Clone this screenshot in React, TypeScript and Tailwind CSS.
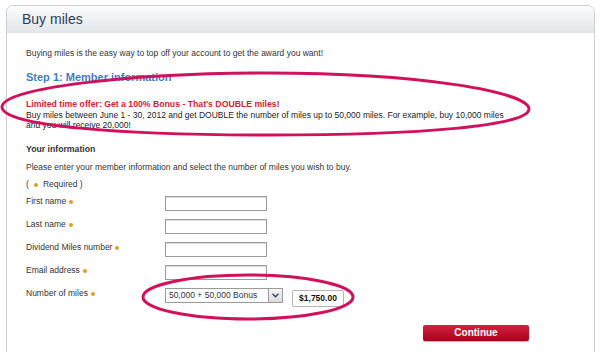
import React from 'react'

const font = { fontFamily: '"Liberation Sans", Arial, sans-serif' }

function Dot() {
  return <span className="ml-[3px] inline-block h-[4px] w-[4px] rounded-full bg-[#d9a12a] align-middle" />
}

function Field({ label }: { label: string }) {
  return (
    <div className="flex h-[23px] items-start">
      <div className="w-[139px] text-[8.5px] leading-[11px] text-[#333]">
        {label}
        <Dot />
      </div>
      <div className="h-[15px] w-[102px] border border-[#9a9a9a] bg-white shadow-[inset_0_1px_1px_rgba(0,0,0,0.15)]" />
    </div>
  )
}

export default function App() {
  return (
    <div className="relative h-[352px] w-[600px] overflow-hidden bg-white" style={font}>
      <div className="ml-[6px] mt-[5px] h-[360px] w-[589px] rounded-t-[7px] border border-[#cfcfcf] bg-white">
        <div className="flex h-[27px] items-center rounded-t-[7px] border-b border-[#e3e3e3] bg-gradient-to-b from-[#fbfbfc] to-[#e3e7ea] pl-[15px]">
          <span className="text-[14px] leading-none text-[#2c3d5b]">Buy miles</span>
        </div>
        <div className="pl-[19px] pr-[20px] pt-[15px]">
          <p className="text-[8.5px] leading-[11px] text-[#333]">
            Buying miles is the easy way to top off your account to get the award you want!
          </p>
          <h2 className="mt-[11px] text-[11px] font-bold leading-[14px] text-[#3a7fc2]">Step 1: Member information</h2>
          <p className="mt-[15px] text-[8.7px] font-bold leading-[11px] text-[#c9262c]">
            Limited time offer: Get a 100% Bonus - That's DOUBLE miles!
          </p>
          <p className="w-[482px] text-[8.5px] leading-[10px] text-[#222]">
            Buy miles between June 1 - 30, 2012 and get DOUBLE the number of miles up to 50,000 miles. For example, buy 10,000 miles and you will receive 20,000!
          </p>
          <h3 className="mt-[14px] text-[8.7px] font-bold leading-[11px] text-[#333]">Your information</h3>
          <p className="mt-[7px] text-[8.5px] leading-[11px] text-[#333]">
            Please enter your member information and select the number of miles you wish to buy.
          </p>
          <p className="mt-[6px] text-[8.5px] leading-[11px] text-[#333]">
            ( <Dot /> &nbsp;Required )
          </p>
          <div className="mt-[6px] flex flex-col">
            <Field label="First name" />
            <Field label="Last name" />
            <Field label="Dividend Miles number" />
            <Field label="Email address" />
            <div className="flex items-start">
              <div className="w-[139px] text-[8.5px] leading-[11px] text-[#333]">
                Number of miles
                <Dot />
              </div>
              <div className="flex h-[15px] w-[118px] border border-[#9a9a9a] bg-white">
                <span className="flex-1 pl-[3px] text-[8.5px] leading-[13px] text-[#333]">50,000 + 50,000 Bonus</span>
                <span className="flex w-[14px] items-center justify-center border-l border-[#9a9a9a] bg-gradient-to-b from-[#f6f6f6] to-[#dcdcdc]">
                  <svg width="7" height="5" viewBox="0 0 7 5">
                    <path d="M0.5 0.8 L3.5 3.8 L6.5 0.8" fill="none" stroke="#345" strokeWidth="1.3" />
                  </svg>
                </span>
              </div>
              <div className="ml-[9px] mt-[2px] flex h-[17px] w-[52px] items-center justify-center rounded-[2px] border border-[#b5b5b5] bg-white text-[8.5px] font-bold text-[#111]">
                $1,750.00
              </div>
            </div>
          </div>
          <div className="mt-[18px] flex justify-end pr-[45px]">
            <button className="h-[16px] w-[106px] rounded-[2px] bg-gradient-to-b from-[#d3203f] to-[#a8001e] text-[10px] font-bold leading-[16px] text-white shadow-[0_1px_1px_rgba(0,0,0,0.3)]">
              Continue
            </button>
          </div>
        </div>
      </div>
      {/* hand-drawn highlight marks */}
      <svg className="pointer-events-none absolute left-0 top-0" width="600" height="352" viewBox="0 0 600 352">
        <path
          d="M 2 107 C 2 88, 130 73, 268 73 C 420 73, 529 92, 529 109 C 529 126, 420 135, 268 135 C 120 135, 2 126, 2 107 Z"
          fill="none"
          stroke="#d0115c"
          strokeWidth="3"
        />
        <ellipse cx="248" cy="297" rx="105" ry="22" fill="none" stroke="#d0115c" strokeWidth="3" />
      </svg>
    </div>
  )
}
